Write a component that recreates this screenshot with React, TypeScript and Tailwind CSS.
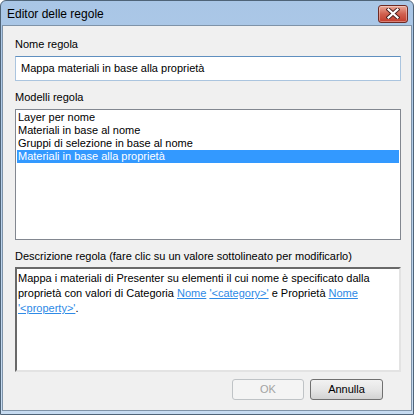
const font = { fontFamily: '"Liberation Sans", Arial, sans-serif' };

function CloseButton() {
  return (
    <div className="flex h-[18px] w-[30px] items-center justify-center rounded-[3px] border border-[#6e2a24] bg-gradient-to-b from-[#e9a899] via-[#d0604f] to-[#c23b2c] shadow-[inset_0_0_0_1px_rgba(255,255,255,0.35)]">
      <svg width="14" height="11" viewBox="0 0 14 11">
        <path d="M2.5 1.5 L11.5 9.5 M11.5 1.5 L2.5 9.5" stroke="#4a2020" strokeWidth="4" strokeLinecap="square" />
        <path d="M2.5 1.5 L11.5 9.5 M11.5 1.5 L2.5 9.5" stroke="#ffffff" strokeWidth="2.2" strokeLinecap="square" />
      </svg>
    </div>
  );
}

const models = [
  'Layer per nome',
  'Materiali in base al nome',
  'Gruppi di selezione in base al nome',
  'Materiali in base alla proprietà',
];

const link = 'text-[#2e8ae6] underline';

export default function App() {
  const selected = 3;

  return (
    <div
      className="flex h-[415px] w-[414px] flex-col overflow-hidden rounded-t-[6px] border border-[#4f6478] bg-gradient-to-b from-[#a9c6e6] to-[#c6dbf1] text-[11px] text-black"
      style={font}
    >
      {/* Title bar */}
      <div className="flex h-[24px] shrink-0 items-center justify-between pl-[6px] pr-[5px] pt-[1px]">
        <span className="text-[12px] leading-none text-black">Editor delle regole</span>
        <CloseButton />
      </div>

      {/* Client area */}
      <div className="mx-[1px] mb-[3px] flex flex-1 flex-col border border-[#7f93a8] bg-[#f0f0f0] px-[12px] pt-[11px]">
        <label className="leading-[15px]">Nome regola</label>
        <div className="mt-[4px] flex h-[25px] w-[386px] items-center border border-[#abc5df] border-t-[#5f8fbf] bg-white pl-[5px]">
          Mappa materiali in base alla proprietà
        </div>

        <label className="mt-[9px] leading-[15px]">Modelli regola</label>
        <div className="mt-[4px] h-[131px] w-[386px] border border-[#828790] bg-white p-[1px]">
          {models.map((m, i) => (
            <div
              key={m}
              className={
                i === selected
                  ? 'h-[13px] bg-[#3399ff] pl-[1px] leading-[13px] text-white'
                  : 'h-[13px] pl-[1px] leading-[13px]'
              }
            >
              {m}
            </div>
          ))}
        </div>

        <label className="mt-[9px] whitespace-nowrap leading-[15px]">
          Descrizione regola (fare clic su un valore sottolineato per modificarlo)
        </label>
        <div className="mt-[3px] h-[105px] w-[386px] whitespace-nowrap border-2 border-b-[#e3e3e3] border-l-[#696969] border-r-[#e3e3e3] border-t-[#696969] bg-white px-[1px] pt-[2px] leading-[15px]">
          Mappa i materiali di Presenter su elementi il cui nome è specificato dalla
          <br />
          proprietà con valori di Categoria <span className={link}>Nome</span>{' '}
          <span className={link}>'&lt;category&gt;'</span> e Proprietà <span className={link}>Nome</span>
          <br />
          <span className={link}>'&lt;property&gt;'</span>.
        </div>

        {/* Buttons */}
        <div className="mt-[7px] flex justify-end gap-[6px] pr-[16px]">
          <button className="h-[21px] w-[72px] rounded-[3px] border border-[#bfc3c6] bg-[#f4f4f4] text-[#a3a3a3]">
            OK
          </button>
          <button className="h-[21px] w-[73px] rounded-[3px] border border-[#707070] bg-gradient-to-b from-[#f2f2f2] via-[#e6e6e6] to-[#d2d2d2] text-black">
            Annulla
          </button>
        </div>
      </div>
    </div>
  );
}
